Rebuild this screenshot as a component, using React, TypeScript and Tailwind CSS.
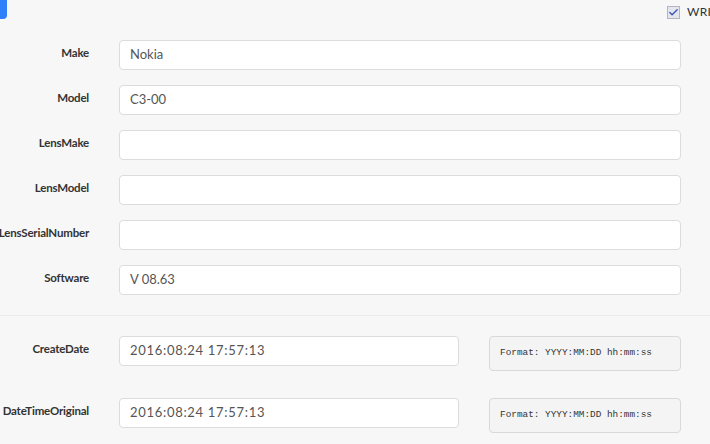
import { Check } from 'lucide-react';

const fields = [
  { label: 'Make', value: 'Nokia' },
  { label: 'Model', value: 'C3-00' },
  { label: 'LensMake', value: '' },
  { label: 'LensModel', value: '' },
  { label: 'LensSerialNumber', value: '' },
  { label: 'Software', value: 'V 08.63' },
];

const dates = [
  { label: 'CreateDate', value: '2016:08:24 17:57:13' },
  { label: 'DateTimeOriginal', value: '2016:08:24 17:57:13' },
];

function Label({ text }: { text: string }) {
  return (
    <div className="w-[89px] shrink-0 flex justify-end pt-[4px]">
      <span className="whitespace-nowrap text-[11.5px] font-bold text-[#333] tracking-[-0.2px]">{text}</span>
    </div>
  );
}

export default function App() {
  return (
    <div className="w-[710px] h-[444px] overflow-hidden bg-[#f7f7f7] font-['Lato',sans-serif]">
      {/* top bar */}
      <div className="relative h-[40px]">
        <div className="absolute left-0 top-0 w-[7px] h-[19px] bg-[#2f80fb] rounded-br-[4px]" />
        <div className="absolute left-[667px] top-[3px] flex items-center gap-[7px] whitespace-nowrap">
          <span className="w-[13px] h-[13px] border border-[#b5b5c2] bg-[#e4e6ee] flex items-center justify-center">
            <Check className="w-[11px] h-[11px] text-[#3b55b8]" strokeWidth={3} />
          </span>
          <span className="text-[12px] text-[#333] tracking-wide">WRITE</span>
        </div>
      </div>

      <div className="flex flex-col gap-[15px]">
        {fields.map((f) => (
          <div key={f.label} className="flex gap-[30px]">
            <Label text={f.label} />
            <div className="w-[562px] h-[30px] bg-white border border-[#dcdcdc] rounded-[4px] flex items-center px-[10px] text-[13px] text-[#555]">
              {f.value}
            </div>
          </div>
        ))}
      </div>

      <div className="mt-[20px] border-t border-[#ebebeb]" />

      <div className="pt-[20px] flex flex-col gap-[27px]">
        {dates.map((d) => (
          <div key={d.label} className="flex gap-[30px]">
            <Label text={d.label} />
            <div className="w-[340px] h-[30px] bg-white border border-[#dcdcdc] rounded-[4px] flex items-center px-[10px] text-[13px] text-[#555] tracking-[0.7px]">
              {d.value}
            </div>
            <div className="w-[192px] h-[35px] bg-[#f4f4f4] border border-[#d9d9d9] rounded-[4px] flex items-center pl-[10px] font-['Liberation_Mono',monospace] text-[9.4px] text-[#333] whitespace-nowrap">
              Format: YYYY:MM:DD hh:mm:ss
            </div>
          </div>
        ))}
      </div>
    </div>
  );
}
